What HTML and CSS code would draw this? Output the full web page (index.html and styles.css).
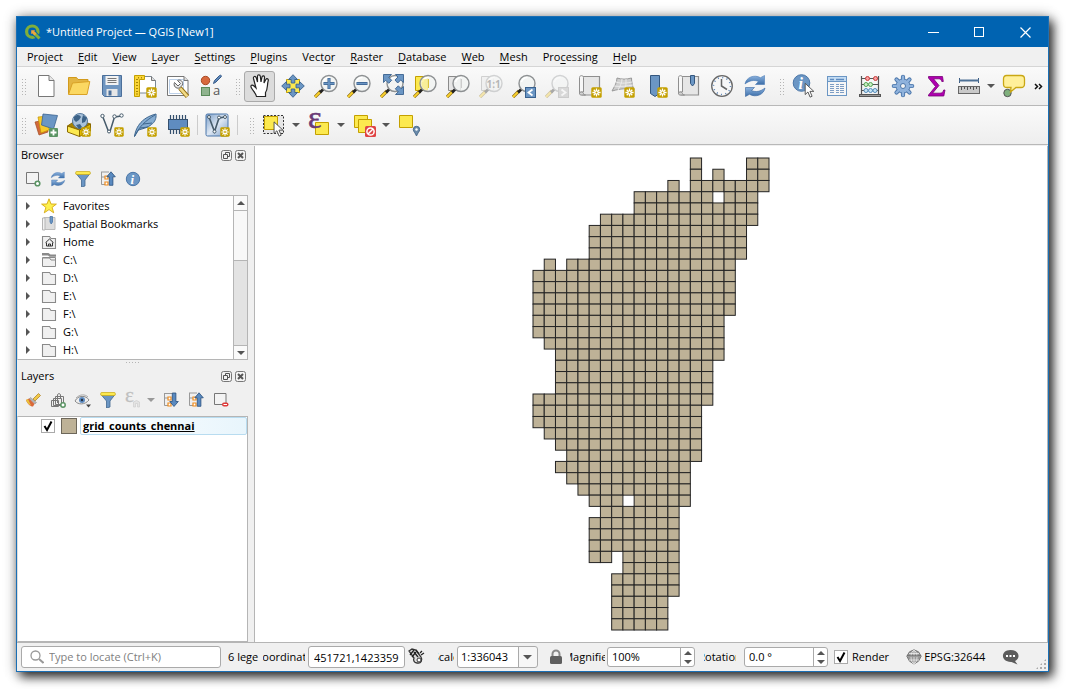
FILE: index.html
```
<!DOCTYPE html>
<html lang="en">
<head>
<meta charset="utf-8">
<title>*Untitled Project — QGIS [New1]</title>
<link rel="stylesheet" href="styles.css">
</head>
<body>
<svg class="defs" aria-hidden="true">
  <defs>
    <linearGradient id="gBlue" x1="0" y1="0" x2="0" y2="1"><stop offset="0" stop-color="#8db4e0"/><stop offset="1" stop-color="#3c6ea8"/></linearGradient>
    <linearGradient id="gFrame" x1="0" y1="0" x2="1" y2="1"><stop offset="0" stop-color="#7c9fc9"/><stop offset=".5" stop-color="#dde7f3"/><stop offset="1" stop-color="#7c9fc9"/></linearGradient>
  </defs>
  <symbol id="star" viewBox="0 0 11 11"><rect x=".3" y=".3" width="10.4" height="10.4" rx="1.5" fill="#c4a000"/><path d="M5.5 1.4v8.2M1.4 5.5h8.2M2.7 2.7l5.6 5.6M8.3 2.7L2.7 8.3" stroke="#fff" stroke-width="1.3"/><circle cx="5.5" cy="5.5" r="1" fill="#c4a000"/></symbol>
  <symbol id="lens" viewBox="0 0 24 24"><path d="M1 23L7 17" stroke="#8a6a10" stroke-width="3.200"/><path d="M1 23L6.500 17.500" stroke="#fcd32d" stroke-width="1.800"/><path d="M6 18.500l3.500-3.500" stroke="#222" stroke-width="2.800"/><circle cx="15" cy="9.500" r="8" fill="#f2f4f3" fill-opacity=".82" stroke="#8d9092" stroke-width="1.400"/><path d="M9.500 8a6 6 0 0 1 6-4.500" fill="none" stroke="#fff" stroke-width="1.500"/></symbol>
  <symbol id="refresh" viewBox="0 0 24 24"><path d="M2 10C3 3.500 11 0 17.500 3.700L21.500 1.500v9h-9l3-3C11 5.500 6.500 6.500 2 10z" fill="url(#gBlue)" stroke="#4a7ab5" stroke-width=".6"/><path d="M22 14c-1 6.500-9 10-15.500 6.300L2.500 22.500v-9h9l-3 3c4.500 2 9 1 13.500-2.500z" fill="url(#gBlue)" stroke="#35659f" stroke-width=".6"/></symbol>
  <symbol id="map" viewBox="0 0 24 24"><path d="M4 2.500h17.500v18.500H4z" fill="#e6e6e6" stroke="#8f8f8f" stroke-width="1.200"/><path d="M1.500 3.500c0-2.500 4-2.500 4 0V18H3.500c-1 0-2 1-2 2z" fill="#f7f7f7" stroke="#8f8f8f"/><path d="M1.500 19.500c0-2 3.500-2 4 0 0 1 1 1.500 2 1.500H3.500c-1.500 0-2-.5-2-1.500z" fill="#d2d2d2" stroke="#8f8f8f"/></symbol>
  <symbol id="arrow" viewBox="0 0 12 18"><path d="M1 1v13l3.200-3 2.500 6 2.300-1-2.500-5.700H11z" fill="#fff" stroke="#444" stroke-width="1"/></symbol>
  <symbol id="funnel" viewBox="0 0 16 16"><path d="M1 2.500h14L10 9v6L6.500 16V9z" fill="#6b96c4" stroke="#41678f" stroke-width=".8"/><rect x=".7" y=".5" width="14.600" height="3" rx="1" fill="#fce94f" stroke="#c9a714" stroke-width=".7"/></symbol>
  <symbol id="tree-up" viewBox="0 0 16 16"><path d="M1 1h8M1.500 1v12.500h4M1.500 6h4" stroke="#999" fill="none"/><path d="M5 5h3v3H5zM5 11h3v3H5z" fill="#fff" stroke="#ef8b1d" stroke-width="1.200"/><path d="M11 .8l4.300 5h-2.400v8.500H9.300V5.800H6.800z" fill="#5a8ac0" stroke="#284f7c" stroke-width=".8"/></symbol>
  <symbol id="tree-down" viewBox="0 0 16 16"><path d="M1 1.500h8M1.500 1v12.500h4M1.500 6h4" stroke="#999" fill="none"/><path d="M5 5h3v3H5zM5 11h3v3H5z" fill="#fff" stroke="#ef8b1d" stroke-width="1.200"/><path d="M11 14.500l4.300-5h-2.400V1H9.300v8.500H6.800z" fill="#5a8ac0" stroke="#284f7c" stroke-width=".8"/></symbol>
  <symbol id="folder" viewBox="0 0 16 16"><path d="M1.500 14.500v-12h7l1.500 2h4.500v10z" fill="#f0f0f0" stroke="#8a8a8a" stroke-width="1.100"/></symbol>
  <symbol id="float" viewBox="0 0 11 11"><rect x=".5" y=".5" width="10" height="10" rx="2" fill="#f3f3f3" stroke="#777"/><path d="M4.500 4.500v-2h4v4h-2M2.500 4.500h4v4h-4z" fill="none" stroke="#555"/></symbol>
  <symbol id="close" viewBox="0 0 11 11"><rect x=".5" y=".5" width="10" height="10" rx="2" fill="#f3f3f3" stroke="#777"/><path d="M3 3l5 5M8 3L3 8" stroke="#555" stroke-width="2"/></symbol>
</svg>

<div class="window">
  <header class="titlebar">
    <svg class="logo" width="16" height="16" viewBox="0 0 16 16"><circle cx="7.300" cy="7.700" r="5.700" fill="none" stroke="#7fae3c" stroke-width="3.200"/><path d="M8 8l6.500 6.500" stroke="#0063b1" stroke-width="5"/><path d="M8.500 8.500l6 6" stroke="#84b13d" stroke-width="3"/><path d="M6.200 6.200h4l-1 1 2.300 2.300-2 2-2.300-2.300-1 1z" fill="#f0a63c"/></svg>
    <h1>*Untitled Project — QGIS [New1]</h1>
    <div class="wincontrols">
      <button aria-label="Minimize"><svg width="11" height="11"><path d="M0 5.500h11" stroke="#fff"/></svg></button>
      <button aria-label="Maximize"><svg width="11" height="11"><rect x=".5" y=".5" width="9" height="9" fill="none" stroke="#fff"/></svg></button>
      <button aria-label="Close"><svg width="11" height="11"><path d="M.5.500l10 10M10.500.500l-10 10" stroke="#fff" stroke-width="1.200"/></svg></button>
    </div>
  </header>

  <nav class="menubar">
    <button>Pro<u>j</u>ect</button><button><u>E</u>dit</button><button><u>V</u>iew</button><button><u>L</u>ayer</button><button><u>S</u>ettings</button><button><u>P</u>lugins</button><button>Vect<u>o</u>r</button><button><u>R</u>aster</button><button><u>D</u>atabase</button><button><u>W</u>eb</button><button><u>M</u>esh</button><button>Pro<u>c</u>essing</button><button><u>H</u>elp</button>
  </nav>

  <div class="toolbar">
    <i class="handle"></i>
    <button class="tool" aria-label="New project"><svg viewBox="0 0 24 24"><path d="M4.500 1.500h10.500l5 5v16H4.500z" fill="#fff" stroke="#777"/><path d="M15 1.500v5h5" fill="#e8e8e8" stroke="#777"/></svg></button>
    <button class="tool" aria-label="Open project"><svg viewBox="0 0 24 24"><path d="M1.500 20V3.500h8l1.500 2h10V9" fill="#e3b542" stroke="#d29a1c"/><path d="M1.500 20.500L5.500 9 22.800 7.500 20 20.500z" fill="#fbd862" stroke="#d9a227"/></svg></button>
    <button class="tool" aria-label="Save project"><svg viewBox="0 0 24 24"><path d="M2.500 1.500h19v21h-17l-2-2z" fill="#7096c0" stroke="#4b6f9a"/><path d="M5.500 2h13v9h-13z" fill="#f3f3f3"/><path d="M7.500 4.500h9M7.500 6.500h9M7.500 8.500h9" stroke="#777"/><path d="M6.500 15h11v7h-11z" fill="#e7e7e7"/><path d="M8.500 16.500h3v5h-3z" fill="#4b6f9a"/></svg></button>
    <button class="tool" aria-label="New print layout"><svg viewBox="0 0 24 24"><path d="M4 2.500h14.500l4 4V19H4z" fill="#fff" stroke="#7a8894"/><path d="M18.500 2.500v4h4" fill="#ddd" stroke="#777"/><path d="M1.500 22.500v-21h10v4h-5v17z" fill="#fad537" stroke="#c4a000"/><path d="M3 5.500h2M3 8.500h2M3 11.500h2M3 14.500h2M3 17.500h2M3 20h2M5.500 3v1.500M8.500 3v1.500" stroke="#a27f00" stroke-width=".9"/><use href="#star" x="13" y="13" width="11" height="11"/></svg></button>
    <button class="tool" aria-label="Layout manager"><svg viewBox="0 0 24 24"><path d="M1.500 2.500h16.500l4 4v15H1.500z" fill="#fff" stroke="#777"/><path d="M3.500 5.500h14v14h-14z" fill="none" stroke="#bcd0e8"/><path d="M18 2.500v4h4" fill="#ddd" stroke="#777"/><path d="M8.500 8.500l3.500 3.500 2.500-2.500-3-3c3-1.500 6 1 5 4.500l-3 3c-3.500 1-6.500-2-5-5.500z" fill="#e6e6e6" stroke="#666"/><path d="M14 14l7.500 8.500" stroke="#8f6b10" stroke-width="4.500"/><path d="M14.200 14.300l7 8" stroke="#f1da86" stroke-width="2.800"/></svg></button>
    <button class="tool" aria-label="Style manager"><svg viewBox="0 0 24 24"><circle cx="6.500" cy="6.500" r="4.200" fill="#d8693d" stroke="#a84a25"/><path d="M14.500 9.500l1-3 5-5c1.500-1 2.500.5 1.500 1.500l-5 5z" fill="#5f87b8" stroke="#365c8b"/><rect x="2.500" y="13.500" width="8" height="8" fill="#8fb38e" stroke="#5a8a5a"/><text x="14" y="21" font-size="13" fill="#555">a</text></svg></button>
    <i class="handle next"></i>
    <button class="tool active" aria-label="Pan map"><svg viewBox="0 0 24 24"><path d="M8.500 22.500c-.5-3-3-5-5-8.500-1.500-2.500.5-4 2.500-2L8 14 5.500 4.500c-.5-2.200 2-2.800 2.700-.8L9.500 8V2.300c0-2 2.700-2 2.800 0L13 8l1-5c.4-1.700 2.700-1.300 2.500.5L16 9l1.800-3.500c1-1.500 3-.5 2.400 1.200C19 11 20 15 17.500 18.500v4z" fill="#fff" stroke="#222" stroke-width="1.200"/></svg></button>
    <button class="tool" aria-label="Pan to selection"><svg viewBox="0 0 24 24"><path d="M5.500 5.500h13v13h-13z" fill="#fce94f" stroke="#c4a000"/><path d="M12 .7l4.500 4.800h-2.700V9h-3.600V5.500H7.500zM12 23.300l4.500-4.800h-2.700V15h-3.600v3.500H7.500zM.7 12l4.800-4.500v2.700H9v3.600H5.500v2.700zM23.300 12l-4.800-4.500v2.700H15v3.600h3.500v2.700z" fill="#6b96c4" stroke="#3a628f" stroke-width=".9"/></svg></button>
    <button class="tool" aria-label="Zoom in"><svg viewBox="0 0 24 24"><use href="#lens"/><path d="M15 4v11M9.500 9.500h11" stroke="#3a628f" stroke-width="3"/><path d="M15 4.500v10M10 9.500h10" stroke="#6b96c4" stroke-width="1.600"/></svg></button>
    <button class="tool" aria-label="Zoom out"><svg viewBox="0 0 24 24"><use href="#lens"/><path d="M9.500 9.500h11" stroke="#3a628f" stroke-width="3"/><path d="M10 9.500h10" stroke="#6b96c4" stroke-width="1.400"/></svg></button>
    <button class="tool" aria-label="Zoom full"><svg viewBox="0 0 24 24"><use href="#lens"/><path d="M3.500.500h8L8.700 3.300l3 3-3 3-3-3-2.200 2.200zM23.500.500v8l-2.800-2.500-3 3-2.700-3 3-3L15.500.500zM23.500 20.500h-8l2.800-2.700-3-3 3-3 3 3 2.200-2.300z" fill="#6b96c4" stroke="#3a628f" stroke-width=".9"/></svg></button>
    <button class="tool" aria-label="Zoom to selection"><svg viewBox="0 0 24 24"><path d="M2.500 2.500h12v14h-12z" fill="#fce94f" stroke="#c4a000"/><use href="#lens"/><path d="M9 5h6v11c-4 0-6-2-6.500-6z" fill="#fce94f" opacity=".45"/><path d="M15.500 5v9" stroke="#d9c23a"/></svg></button>
    <button class="tool" aria-label="Zoom to layer"><svg viewBox="0 0 24 24"><path d="M2.500 2.500h12v14h-12z" fill="#e6e6e6" stroke="#8a8a8a"/><use href="#lens"/><path d="M15.500 5v9" stroke="#ccc"/></svg></button>
    <button class="tool" disabled aria-label="Zoom to native resolution"><svg viewBox="0 0 24 24"><path d="M2.500 2.500h12v14h-12z" fill="#e6e6e6" stroke="#8a8a8a"/><use href="#lens"/><text x="7.500" y="13.500" font-size="10" font-weight="bold" fill="#444">1:1</text></svg></button>
    <button class="tool" aria-label="Zoom last"><svg viewBox="0 0 24 24"><use href="#lens"/><rect x="13.500" y="13.500" width="10" height="10" fill="#6b96c4" stroke="#3a628f"/><path d="M20.500 15.500l-4 3 4 3" fill="none" stroke="#fff" stroke-width="1.800"/></svg></button>
    <button class="tool" disabled aria-label="Zoom next"><svg viewBox="0 0 24 24"><use href="#lens"/><rect x="13.500" y="13.500" width="10" height="10" fill="#aaa" stroke="#888"/><path d="M16.500 15.500l4 3-4 3" fill="none" stroke="#fff" stroke-width="1.800"/></svg></button>
    <button class="tool" aria-label="New map view"><svg viewBox="0 0 24 24"><use href="#map"/><use href="#star" x="13" y="13" width="11" height="11"/></svg></button>
    <button class="tool" aria-label="New 3D map view"><svg viewBox="0 0 24 24"><path d="M6 4c5 1.500 9 1.500 14.500 0 0 4 1 8 2.500 12-7-2-13-1.500-22 1 2-4 5-8 5-13z" fill="#cecece" stroke="#999"/><path d="M5 8c6 2 11 1 16 0M3 12c7 1 13 0 19-1M11 5c0 4-2 7-4 11M15 5c0 4 0 7-1 11" fill="none" stroke="#ececec"/><use href="#star" x="13" y="13" width="11" height="11"/></svg></button>
    <button class="tool" aria-label="New spatial bookmark"><svg viewBox="0 0 24 24"><path d="M6.500 1.500h9v18L11 22.500l-4.500-3z" fill="#6b96c4" stroke="#34577f"/><use href="#star" x="13" y="13" width="11" height="11"/></svg></button>
    <button class="tool" aria-label="Show bookmarks"><svg viewBox="0 0 24 24"><use href="#map"/><path d="M13.500 1.500h4v8l-2 2.500-2-2.500z" fill="#6b96c4" stroke="#34577f"/></svg></button>
    <button class="tool" aria-label="Temporal controller"><svg viewBox="0 0 24 24"><circle cx="12" cy="12" r="10.300" fill="#f7f7f7" stroke="#686868" stroke-width="1.300"/><circle cx="12" cy="12" r="8.500" fill="none" stroke="#5b83b4" stroke-width="1.600" stroke-dasharray="1 3.450"/><path d="M11.500 5v7l5.500 3.500" fill="none" stroke="#666" stroke-width="1.500"/></svg></button>
    <button class="tool" aria-label="Refresh"><svg viewBox="0 0 24 24"><use href="#refresh"/></svg></button>
    <i class="handle next"></i>
    <button class="tool" aria-label="Identify features"><svg viewBox="0 0 24 24"><circle cx="9.500" cy="9" r="8.300" fill="#6b96c4" stroke="#4a76a8"/><text x="6.500" y="14.500" font-size="16" class="serif-i" fill="#fff">i</text><use href="#arrow" x="12" y="8.500" width="11" height="15.500"/></svg></button>
    <button class="tool" aria-label="Attribute table"><svg viewBox="0 0 24 24"><rect x="2.500" y="2.500" width="19" height="19" fill="#f6f6f6" stroke="#6b96c4"/><path d="M3 3h18v5H3z" fill="#c4dcf3"/><path d="M2.500 7.500h19" stroke="#6b96c4"/><path d="M5 5.500h4M11 5.500h8" stroke="#5f8cc0" stroke-width="1.500"/><path d="M5 10.500h4M5 12.500h4M5 14.500h4M5 16.500h4M5 18.500h4M11 10.500h3M11 12.500h3M11 14.500h3M11 16.500h3M11 18.500h3M15 10.500h4M15 12.500h4M15 14.500h4M15 16.500h4M15 18.500h4" stroke="#7d9dc4"/></svg></button>
    <button class="tool" aria-label="Field calculator"><svg viewBox="0 0 24 24"><path d="M3.500 2v19M20.500 2v19M3.500 4.500h17M3.500 10.500h17M3.500 16.500h17" stroke="#555" stroke-width="1.200"/><rect x="1.500" y="20.500" width="21" height="2" fill="#999" stroke="#555"/><g fill="#f8a0a0" stroke="#c73c3c"><circle cx="9.500" cy="4.500" r="2"/><circle cx="17.500" cy="4.500" r="2"/></g><g fill="#c8efc4" stroke="#55a455"><circle cx="8" cy="10.500" r="2"/><circle cx="12.500" cy="10.500" r="2"/></g><g fill="#c5e3f5" stroke="#568dbb"><circle cx="8" cy="16.500" r="2"/><circle cx="12.500" cy="16.500" r="2"/><circle cx="17" cy="16.500" r="2"/></g></svg></button>
    <button class="tool" aria-label="Toolbox"><svg viewBox="0 0 24 24"><g stroke="#4b76aa" stroke-width="4.200" stroke-linecap="round"><path d="M12 2.800v18.400M2.800 12h18.400M5.500 5.500l13 13M18.500 5.500l-13 13"/></g><circle cx="12" cy="12" r="7" fill="#8fb2dc" stroke="#4b76aa"/><g stroke="#8fb2dc" stroke-width="2.400" stroke-linecap="round"><path d="M12 2.800v18.400M2.800 12h18.400M5.500 5.500l13 13M18.500 5.500l-13 13"/></g><circle cx="12" cy="12" r="5.500" fill="#8fb2dc"/><circle cx="12" cy="12" r="2.500" fill="#f3f3f3" stroke="#4b76aa"/></svg></button>
    <button class="tool" aria-label="Statistical summary"><svg viewBox="0 0 24 24"><path d="M4.500 2.500h14l.8 5h-1.500c-.6-2-1.500-2.700-3.500-2.700H9.500l5.500 6.700-6.500 7.700h7.500c2 0 3-1 3.700-3.200h1.300l-1.200 6H4.500v-1l7-8.500-7-8.500z" fill="#b000b0" stroke="#770077" stroke-width=".8"/></svg></button>
    <button class="tool" aria-label="Measure line"><svg viewBox="0 0 24 24"><path d="M2.500 4v5M21.500 4v5" stroke="#3a5a80"/><path d="M2 6.500h20" stroke="#4e7196" stroke-width="2"/><rect x="1.500" y="12.500" width="21" height="7" fill="#c9c9c9" stroke="#666"/><path d="M4.500 13v3M7.500 13v2M10.500 13v3M13.500 13v2M16.500 13v3M19.500 13v2" stroke="#555"/></svg></button>
    <button class="drop" aria-label="Measure options"></button>
    <button class="tool" aria-label="Map tips"><svg viewBox="0 0 24 24"><circle cx="5.500" cy="19" r="3.700" fill="#7fb07e" stroke="#555"/><path d="M4.500 1.500h14.500q3.500 0 3.500 3.500v5q0 3.500-3.500 3.500h-5L8.500 18l.5-4.500H4.500Q1.500 13.500 1.500 10V5q0-3.500 3-3.500z" fill="#fff09a" stroke="#c9a714" stroke-width="1.300"/></svg></button>
    <button class="more" aria-label="More tools"><svg width="9" height="7" viewBox="0 0 9 7"><path d="M1 1l2.500 2.500L1 6M5 1l2.500 2.500L5 6" fill="none" stroke="#111" stroke-width="1.500"/></svg></button>
  </div>

  <div class="toolbar">
    <i class="handle"></i>
    <button class="tool" aria-label="Data source manager"><svg viewBox="0 0 24 24"><path d="M1 9l10-2 3 12-9 3z" fill="#d2693c" stroke="#a04a20" stroke-width=".7"/><path d="M4 4l11-1v14l-8 3z" fill="#f8ca2b" stroke="#c29200" stroke-width=".7"/><path d="M9 1l14.500 1.500-4 13.500-12-4z" fill="#6b96c4" stroke="#3a628f" stroke-width=".8"/><rect x="15" y="15" width="9" height="9" rx="1" fill="#5b9464"/><path d="M19.500 16.500v6M16.500 19.500h6" stroke="#fff" stroke-width="1.800"/></svg></button>
    <button class="tool" aria-label="New GeoPackage layer"><svg viewBox="0 0 24 24"><path d="M.5 13l6-4h11l6 2-11 6z" fill="#a98400" stroke="#8b6a00"/><circle cx="13" cy="8" r="7.500" fill="#a9c2da" stroke="#55789c"/><path d="M7 4c3-3 6-2 7 0l-2 3-3 2-2-2zM16 2l4 3-2 4-3 1v-4zM9 12l4-1 2 3-3 2z" fill="#3c6287"/><path d="M.5 13l12 4v6.500L.5 19z" fill="#fce94f" stroke="#8b6a00"/><path d="M12.500 17l11-6v7l-11 5.500z" fill="#e0b700" stroke="#8b6a00"/><use href="#star" x="14" y="14" width="10" height="10"/></svg></button>
    <button class="tool" aria-label="New shapefile layer"><svg viewBox="0 0 24 24"><path d="M2.500 3l6 15.500h1.500L14.500 4l7-1" fill="none" stroke="#465b6b" stroke-width="1.500"/><g fill="#fff" stroke="#465b6b"><circle cx="2.500" cy="3" r="1.700"/><circle cx="14.500" cy="3.500" r="1.700"/><circle cx="21.500" cy="2.500" r="1.700"/><circle cx="9" cy="18.500" r="1.500"/></g><use href="#star" x="14" y="14" width="10" height="10"/></svg></button>
    <button class="tool" aria-label="New SpatiaLite layer"><svg viewBox="0 0 24 24"><path d="M1.500 23.500C2.500 16 7 5 23 1c.5 4-1 8-4.500 10.500C15 15 8 16 5.500 17z" fill="#85acd2" stroke="#3f678f"/><path d="M1.500 23.500C6 14 12 8 22 2M7 15l8-1M10 11l9-1" fill="none" stroke="#3f678f"/><use href="#star" x="14" y="14" width="10" height="10"/></svg></button>
    <button class="tool" aria-label="New temporary scratch layer"><svg viewBox="0 0 24 24"><path d="M4.500 2v19M7.500 2v19M10.500 2v19M13.500 2v19M16.500 2v19M19.500 2v19" stroke="#35506e" stroke-width="1.200"/><rect x="2.500" y="6.500" width="19" height="10" fill="#5f8cc0" stroke="#35506e"/><use href="#star" x="14" y="14" width="10" height="10"/></svg></button>
    <i class="sep"></i>
    <button class="tool" aria-label="New virtual layer"><svg viewBox="0 0 24 24"><rect x="1" y="1" width="22" height="22" rx="1.500" fill="url(#gFrame)" stroke="#4b76aa"/><path d="M4 4l5.500 14.500L14 5l6-1" fill="none" stroke="#465b6b" stroke-width="1.600"/><g fill="#fff" stroke="#465b6b"><circle cx="4" cy="4" r="1.500"/><circle cx="14" cy="4.500" r="1.500"/><circle cx="20" cy="4" r="1.500"/><circle cx="9.500" cy="18.500" r="1.500"/></g><use href="#star" x="15" y="14" width="10" height="10"/></svg></button>
    <i class="sep wide"></i>
    <i class="handle next"></i>
    <button class="tool" aria-label="Select features"><svg viewBox="0 0 24 24"><rect x="1.500" y="2.500" width="20" height="18" fill="#e6e6e6" stroke="#333" stroke-dasharray="2 1.500"/><path d="M2.500 3.500h13v13h-13z" fill="#fce94f" stroke="#c4a000"/><use href="#arrow" x="10" y="8" width="13" height="16"/></svg></button>
    <button class="drop" aria-label="Select options"></button>
    <button class="tool" aria-label="Select by expression"><svg viewBox="0 0 24 24"><path d="M8.500 9.500h13v12h-13z" fill="#fce94f" stroke="#c4a000"/><text x="1" y="15" font-size="32" class="serif light" fill="#6a3a76" stroke="#6a3a76" stroke-width=".6">ε</text></svg></button>
    <button class="drop" aria-label="Expression options"></button>
    <button class="tool" aria-label="Deselect features"><svg viewBox="0 0 24 24"><path d="M2.500 2.500h13v12h-13z" fill="#fce94f" stroke="#c4a000"/><path d="M6.500 6.500h13v13h-13z" fill="#fce94f" stroke="#c4a000"/><rect x="13" y="13" width="11" height="11" rx="1.500" fill="#df4444"/><circle cx="18.500" cy="18.500" r="3.600" fill="none" stroke="#fff" stroke-width="1.500"/><path d="M16 21l5-5" stroke="#fff" stroke-width="1.500"/></svg></button>
    <button class="drop" aria-label="Deselect options"></button>
    <button class="tool" aria-label="Select by location"><svg viewBox="0 0 24 24"><path d="M2.500 2.500h13v12h-13z" fill="#fce94f" stroke="#c4a000"/><path d="M19.500 23c-1-3-3.200-4.500-3.200-6.500a3.200 3.200 0 0 1 6.400 0c0 2-2.200 3.500-3.200 6.500z" fill="#6b8cab" stroke="#4a6b8c"/><circle cx="19.500" cy="16.500" r="1.200" fill="#fff"/></svg></button>
  </div>

  <main class="workspace">
    <aside class="docks">
      <section class="dock">
        <div class="dockhead"><h2>Browser</h2><button aria-label="Float"><svg width="11" height="11"><use href="#float"/></svg></button><button aria-label="Close"><svg width="11" height="11"><use href="#close"/></svg></button></div>
        <div class="docktools">
          <button aria-label="Add layer"><svg viewBox="0 0 16 16"><path d="M1.500 1.500h12v11h-12z" fill="#f3f3f3" stroke="#777"/><circle cx="12.500" cy="12.500" r="2.300" fill="#fff" stroke="#5b9464" stroke-width="1.600"/></svg></button>
          <button aria-label="Refresh browser"><svg viewBox="0 0 16 16"><use href="#refresh"/></svg></button>
          <button aria-label="Filter browser"><svg viewBox="0 0 16 16"><use href="#funnel"/></svg></button>
          <button aria-label="Collapse all"><svg viewBox="0 0 16 16"><use href="#tree-up"/></svg></button>
          <button aria-label="Properties"><svg viewBox="0 0 16 16"><circle cx="8" cy="8" r="6.700" fill="#6b96c4" stroke="#4a76a8"/><text x="5.500" y="12.500" font-size="13" class="serif-i" fill="#fff">i</text></svg></button>
        </div>
        <div class="tree">
          <ul>
            <li><svg viewBox="0 0 16 16"><path d="M8 .8l2 5.200 5.400.1-4.300 3.300 1.600 5.400L8 11.600l-4.700 3.200 1.600-5.400L.6 6.100 6 6z" fill="#fdf04e" stroke="#d6a813" stroke-width=".9"/></svg>Favorites</li>
            <li><svg viewBox="0 0 16 16"><path d="M3 1.500h11v12H3z" fill="#ddd" stroke="#bbb"/><path d="M1.500 14V2h2.500v12z" fill="#f2f2f2" stroke="#b5b5b5"/><path d="M9 .5h2.500V6L10.200 8 9 6z" fill="#6b96c4" stroke="#4a76a8" stroke-width=".8"/></svg>Spatial Bookmarks</li>
            <li><svg viewBox="0 0 16 16"><use href="#folder"/><path d="M4.500 8.700l4-3.700 4 3.700M5.500 8.500V12h6V8.500M7.500 12v-2h2v2" fill="none" stroke="#333"/></svg>Home</li>
            <li><svg viewBox="0 0 16 16"><path d="M1.500 14.500v-9h13v9z" fill="#f0f0f0" stroke="#8a8a8a"/><path d="M1 1h6.500l2 1.500H15v2.200H8.500L7 3.500H1z" fill="#8a8a8a"/><path d="M2 6h6.500l1.500 2h4.500" stroke="#8a8a8a" fill="none"/></svg>C:\</li>
            <li><svg viewBox="0 0 16 16"><use href="#folder"/></svg>D:\</li>
            <li><svg viewBox="0 0 16 16"><use href="#folder"/></svg>E:\</li>
            <li><svg viewBox="0 0 16 16"><use href="#folder"/></svg>F:\</li>
            <li><svg viewBox="0 0 16 16"><use href="#folder"/></svg>G:\</li>
            <li><svg viewBox="0 0 16 16"><use href="#folder"/></svg>H:\</li>
          </ul>
          <div class="scroll"><button class="up" aria-label="Scroll up"></button><div class="thumb"></div><button class="down" aria-label="Scroll down"></button></div>
        </div>
      </section>
      <div class="split"></div>
      <section class="dock grow">
        <div class="dockhead"><h2>Layers</h2><button aria-label="Float"><svg width="11" height="11"><use href="#float"/></svg></button><button aria-label="Close"><svg width="11" height="11"><use href="#close"/></svg></button></div>
        <div class="docktools">
          <button aria-label="Layer styling"><svg viewBox="0 0 16 16"><path d="M8 7l5.500-5.500 2 2L10 9z" fill="#f0c948" stroke="#a9791b" stroke-width=".7"/><path d="M5.500 5.500l6 5-1.500 1.500-6-5z" fill="#b5b5b5" stroke="#888" stroke-width=".5"/><path d="M1 8l3-1.500L9.500 12 8 14.500C5 14.500 2.500 12 1 8z" fill="#d9683a"/><path d="M1 8l2-1 3 6.500C3.500 12.500 2 10.500 1 8z" fill="#e9c43c"/></svg></button>
          <button aria-label="Add group"><svg viewBox="0 0 16 16"><path d="M5.500 4.500h8v8h-8zM3.500 6.500h8v7h-8zM1.500 8.500h7v6h-7zM7.500 11V2.500q1.500-2 3 0v4" fill="none" stroke="#777"/><circle cx="13" cy="13" r="2.200" fill="#fff" stroke="#5b9464" stroke-width="1.500"/></svg></button>
          <button aria-label="Map themes"><svg viewBox="0 0 16 16"><path d="M0 9c3-6 11-6 14-1-4 5-11 5-14 1z" fill="#eee" stroke="#8a8a8a"/><path d="M1 6c4-4 9-4 12-1" fill="none" stroke="#aaa"/><circle cx="7" cy="8" r="3" fill="#5f8cc0"/><circle cx="7" cy="8" r="1.200" fill="#234"/><path d="M11 12.500h5l-2.500 3z" fill="#444"/></svg></button>
          <button aria-label="Filter legend"><svg viewBox="0 0 16 16"><use href="#funnel"/></svg></button>
          <button disabled aria-label="Filter by expression"><svg viewBox="0 0 16 16"><text x="0" y="10" font-size="21" class="serif light" fill="#666" stroke="#666" stroke-width=".3">ε</text><path d="M8.500 15v-5q3-3 6 0v5h-2v-3.500h-2V15z" fill="#ccc" stroke="#888" stroke-width=".6"/></svg></button>
          <button class="drop pale" aria-label="Expression filter options"></button>
          <button aria-label="Expand all"><svg viewBox="0 0 16 16"><use href="#tree-down"/></svg></button>
          <button aria-label="Collapse all layers"><svg viewBox="0 0 16 16"><use href="#tree-up"/></svg></button>
          <button aria-label="Remove layer"><svg viewBox="0 0 16 16"><path d="M1.500 1.500h11.500v11h-11.500z" fill="#f3f3f3" stroke="#777"/><rect x="9" y="10.500" width="6.500" height="4" rx="2" fill="#e03a3a"/><path d="M10.500 12.500h3.500" stroke="#fff"/></svg></button>
        </div>
        <div class="tree layers">
          <div class="layer"><input type="checkbox" id="vis" checked aria-label="Layer visibility"><span class="swatch"></span><label for="vis">grid_counts_chennai</label></div>
        </div>
      </section>
    </aside>
    <div class="canvas"><svg id="grid" width="238" height="474" viewBox="-1 -1 238 474" role="img" aria-label="Map grid"></svg></div>
  </main>

  <footer class="status">
    <div class="locator"><svg width="14" height="14" viewBox="0 0 14 14"><circle cx="5.500" cy="5.500" r="4.500" fill="none" stroke="#999" stroke-width="1.300"/><path d="M9 9l4.500 4" stroke="#999" stroke-width="2"/></svg><input type="text" placeholder="Type to locate (Ctrl+K)" aria-label="Type to locate"></div>
    <span class="clip message">6 lege</span>
    <label class="clip coordlabel" for="coord">Coordinate</label>
    <input class="field coord" id="coord" type="text" value="451721,1423359">
    <button class="icon" aria-label="Toggle extents"><svg width="18" height="18" viewBox="0 0 18 18"><path d="M1 3l3-2 4 1 5 7c2 3 0 7-4 6-3 0-4-3-3-5z" fill="#ddd" stroke="#333" stroke-width="1.300"/><path d="M2 7l4-5M4 9l4-5M6 4l4 5M8 2l3 4M12 5l2-2M13 7l3-2" stroke="#222" stroke-width="1.300"/><circle cx="11" cy="12" r="2" fill="#fff" stroke="#333"/></svg></button>
    <label class="clip scalelabel" for="scale">Scale</label>
    <select class="field scale" id="scale"><option>1:336043</option></select>
    <button class="icon lock" aria-label="Lock scale"><svg width="14" height="16" viewBox="0 0 14 16"><path d="M3.500 8V5a3.500 3.500 0 0 1 7 0v3" fill="none" stroke="#888" stroke-width="2"/><rect x="1" y="7" width="12" height="8" rx="1.500" fill="#5f5f5f"/></svg></button>
    <label class="clip maglabel" for="mag">Magnifier</label>
    <div class="spin mag"><input id="mag" type="text" value="100%"><div><button class="up" aria-label="Increase magnifier"></button><button class="down" aria-label="Decrease magnifier"></button></div></div>
    <label class="clip rotlabel" for="rot">Rotation</label>
    <div class="spin rot"><input id="rot" type="text" value="0.0 °"><div><button class="up" aria-label="Increase rotation"></button><button class="down" aria-label="Decrease rotation"></button></div></div>
    <input type="checkbox" id="render" checked><label class="render" for="render">Render</label>
    <button class="crs"><svg width="16" height="16" viewBox="0 0 16 16"><path d="M8 .8l4.500 2 2.700 4.400-2.700 5L8 15l-4.500-2.800-2.700-5 2.700-4.400z" fill="#999" stroke="#777"/><path d="M1 7.500h14M3 4.500h10M3 11h10M8 1v14" stroke="#eee" stroke-width=".8"/><ellipse cx="8" cy="8" rx="3" ry="6.500" fill="none" stroke="#eee" stroke-width=".8"/><path d="M1 7h14" stroke="#555"/></svg>EPSG:32644</button>
    <button class="icon log" aria-label="Messages"><svg width="17" height="16" viewBox="0 0 17 16"><path d="M8.500 1C18 1 18.500 10 13 12l2.500 3.500-6-2.500C-1.500 13.500-2 1 8.500 1z" fill="#5c5c5c"/><path d="M4 7h2M7.500 7h2M11 7h2" stroke="#fff" stroke-width="2"/></svg></button>
    <i class="grip"></i>
  </footer>
</div>
<script src="grid.js"></script>
</body>
</html>
```
FILE: styles.css
```
* { box-sizing: border-box; }
body {
  margin: 0;
  padding: 16px 17px 17px 16px;
  height: 100vh;
  background: #fff;
  color: #000;
  font: 11px/16px "Open Sans", "Noto Sans", sans-serif;
}
button, input, select { font: inherit; color: inherit; }
button { border: 0; padding: 0; background: none; display: flex; align-items: center; justify-content: center; }
button:disabled { opacity: 0.35; }
h1, h2 { margin: 0; font-size: 11px; font-weight: 400; }
.defs { position: absolute; width: 0; height: 0; }
.serif, .serif-i { font-family: "Liberation Serif", serif; font-weight: bold; }
.light { font-weight: 400; }
.serif-i { font-style: italic; }

.window {
  height: 100%;
  display: flex;
  flex-direction: column;
  border: 1px solid #1a6fb5;
  background: #f0f0f0;
  box-shadow: 4px 5px 10px rgba(0, 0, 0, 0.8), 0 0 12px rgba(0, 0, 0, 0.3);
}
.titlebar { flex: none; height: 30px; display: flex; align-items: center; background: #0063b1; color: #fff; padding-left: 8px; gap: 5px; }
.wincontrols { display: flex; margin-left: auto; height: 100%; }
.wincontrols button { width: 46px; }
.menubar { flex: none; height: 20px; display: flex; gap: 1px; padding-left: 3px; border-bottom: 1px solid #d5d5d5; }
.menubar button { display: block; padding: 0 7px; line-height: 19px; }
.menubar u { text-underline-offset: 2px; }

.toolbar {
  flex: none;
  height: 39px;
  display: flex;
  align-items: center;
  gap: 2px;
  padding-left: 4px;
  background: linear-gradient(#fafafa, #eee);
  border-bottom: 1px solid #b8b8b8;
}
.handle { flex: none; width: 5px; height: 17px; margin-right: 2px; background: radial-gradient(circle, #b5b5b5 1px, transparent 1px) 0 0 / 3px 3px; }
.handle.next { margin-left: 7px; }
.tool { flex: none; width: 31px; height: 31px; border-radius: 3px; }
.tool svg { width: 24px; height: 24px; overflow: visible; }
.tool.active { background: #dcdcdc; border: 1px solid #aaa; }
.drop { width: 10px; height: 30px; }
.drop::after { content: ""; border: 4px solid transparent; border-top-color: #555; border-bottom: 0; }
.more { margin-left: auto; margin-right: 5px; }
.sep { width: 1px; height: 20px; margin: 0 1px 0 2px; background: #ccc; }
.sep.wide { margin: 0 2px 0 3px; }

.workspace { flex: 1; min-height: 0; display: flex; gap: 6px; padding-top: 1px; }
.docks { flex: none; width: 231px; display: flex; flex-direction: column; }
.dock { display: flex; flex-direction: column; }
.dock.grow { flex: 1; min-height: 0; }
.dockhead { height: 18px; display: flex; align-items: center; gap: 3px; padding: 0 2px 0 4px; }
.dockhead h2 { flex: 1; }
.docktools { height: 31px; display: flex; align-items: center; gap: 9px; padding: 0 0 2px 8px; }
.docktools svg { width: 16px; height: 16px; overflow: visible; }
.docktools .drop { width: 8px; margin: 0 -1px 0 -3px; }
.drop.pale::after { border-top-color: #999; }
.tree { display: flex; height: 165px; background: #fff; border: 1px solid #b5b5b5; border-left-color: #ddd; overflow: hidden; }
.tree.layers { flex: 1; height: auto; display: block; }
.tree ul { flex: 1; list-style: none; margin: 0; padding: 1px 0 0 8px; }
.tree li { height: 18px; display: flex; align-items: center; line-height: 18px; }
.tree li::before { content: ""; border: 4px solid transparent; border-left-color: #555; border-right: 0; margin-right: 11px; }
.tree li svg { width: 16px; height: 16px; margin-right: 6px; }
.scroll { width: 14px; display: flex; flex-direction: column; border-left: 1px solid #b5b5b5; background: #e3e3e3; }
.scroll button { height: 14px; background: #fafafa; }
.scroll .thumb { height: 51px; background: #f8f8f8; border: solid #b5b5b5; border-width: 1px 0; }
.scroll .down { margin-top: auto; border-top: 1px solid #b5b5b5; }
.up::after, .down::after { content: ""; border: 4px solid transparent; }
.up::after { border-bottom-color: #555; border-top: 0; }
.down::after { border-top-color: #555; border-bottom: 0; }
.split { height: 7px; margin: 0 107px; background: radial-gradient(circle, #b5b5b5 1px, transparent 1px) center 1px / 3px 3px repeat-x; }
.layer { display: flex; align-items: center; padding-left: 23px; }
.swatch { width: 16px; height: 16px; margin: 0 3px 0 6px; background: #beb297; border: 1px solid #6d675a; }
.layer label { flex: 1; height: 18px; padding-left: 2px; border: 1px solid #b8dcf0; border-radius: 2px; background: linear-gradient(90deg, #fff, #e8f5fc); font-weight: 700; text-decoration: underline; }
input[type="checkbox"] {
  appearance: none;
  width: 14px;
  height: 14px;
  margin: 0;
  border: 1px solid #aaa;
  background: #fff url("data:image/svg+xml,%3Csvg xmlns='http://www.w3.org/2000/svg' viewBox='0 0 12 12'%3E%3Cpath d='M2.500 6l2.500 4 4.500-8.500' fill='none' stroke='%23000' stroke-width='2'/%3E%3C/svg%3E");
}
.canvas { flex: 1; display: flex; align-items: center; justify-content: center; background: #fff; border: solid #b5b5b5; border-width: 0 1px 0 1px; }
#grid rect { fill: #beb297; stroke: #232323; }

.status { flex: none; height: 29px; display: flex; align-items: center; padding-left: 4px; border-top: 1px solid #b5b5b5; }
.locator, .field, .spin { height: 22px; border: 1px solid #aaa; border-radius: 3px; background: #fff; }
.locator { width: 200px; display: flex; align-items: center; gap: 5px; padding-left: 8px; }
.status input[type="text"] { outline: 0; }
.locator input, .spin input { flex: 1; min-width: 0; border: 0; padding: 0; background: none; }
.locator input::placeholder { color: #808080; opacity: 1; }
.clip { flex: none; display: flex; justify-content: center; overflow: hidden; white-space: nowrap; }
.message { width: 32px; margin-left: 7px; justify-content: flex-start; }
.coordlabel { width: 42px; margin: 0 3px; }
.coord { width: 97px; padding: 0 5px; }
.icon { width: 24px; }
.scalelabel { width: 16px; margin: 0 3px 0 9px; }
.scale {
  width: 81px;
  padding: 0 3px;
  appearance: none;
  background:
    url("data:image/svg+xml,%3Csvg xmlns='http://www.w3.org/2000/svg' viewBox='0 0 19 20'%3E%3Cpath d='M0 0h19v20H0z' fill='%23f6f6f6'/%3E%3Cpath d='M.5 0v20' stroke='%23aaa'/%3E%3Cpath d='M5 8h9l-4.500 4.500z' fill='%23555'/%3E%3C/svg%3E") right / 19px 20px no-repeat #fff;
}
.lock { margin: 0 2px 0 6px; }
.maglabel { width: 35px; margin-right: 2px; }
.spin { display: flex; height: 20px; }
.spin input { padding-left: 4px; }
.spin > div { width: 14px; display: flex; flex-direction: column; border-left: 1px solid #aaa; }
.spin button { flex: 1; }
.mag { width: 88px; }
.rotlabel { width: 32px; margin: 0 8px 0 9px; }
.rot { width: 84px; margin-right: 6px; }
.render { margin-left: 4px; }
.crs { margin-left: 17px; gap: 2px; }
.log { margin-left: 13px; }
.grip { width: 12px; height: 12px; margin: auto 1px 1px auto; background: radial-gradient(circle, #aaa 1px, transparent 1px) 0 0 / 4px 4px; clip-path: polygon(100% 0, 100% 100%, 0 100%); }
```
FILE: grid.js
```
// Each row lists its filled column runs as [first, last] pairs.
const rows = [
  [[14, 14], [19, 20]],
  [[14, 14], [16, 16], [19, 20]],
  [[12, 12], [14, 20]],
  [[9, 15], [17, 19]],
  [[9, 19]],
  [[6, 19]],
  [[5, 18]], [[5, 18]], [[5, 18]],
  [[1, 1], [3, 17]],
  [[0, 17]], [[0, 17]], [[0, 17]], [[0, 17]],
  [[0, 16]], [[0, 16]],
  [[1, 16]],
  [[2, 16]],
  [[2, 15]], [[2, 15]], [[2, 15]],
  [[0, 15]],
  [[0, 14]], [[0, 14]],
  [[1, 14]],
  [[2, 14]],
  [[3, 14]],
  [[2, 13]],
  [[3, 13]],
  [[4, 13]],
  [[5, 7], [9, 13]],
  [[6, 12]],
  [[5, 12]], [[5, 12]], [[5, 12]],
  [[5, 6], [8, 12]],
  [[8, 12]],
  [[7, 12]], [[7, 12]],
  [[7, 11]], [[7, 11]], [[7, 11]]
];
const size = 236 / 21;
const svg = document.getElementById("grid");
rows.forEach((runs, r) => {
  for (const [first, last] of runs) {
    for (let c = first; c <= last; c++) {
      const cell = document.createElementNS("http://www.w3.org/2000/svg", "rect");
      cell.setAttribute("x", c * size);
      cell.setAttribute("y", r * size);
      cell.setAttribute("width", size);
      cell.setAttribute("height", size);
      svg.appendChild(cell);
    }
  }
});
```
